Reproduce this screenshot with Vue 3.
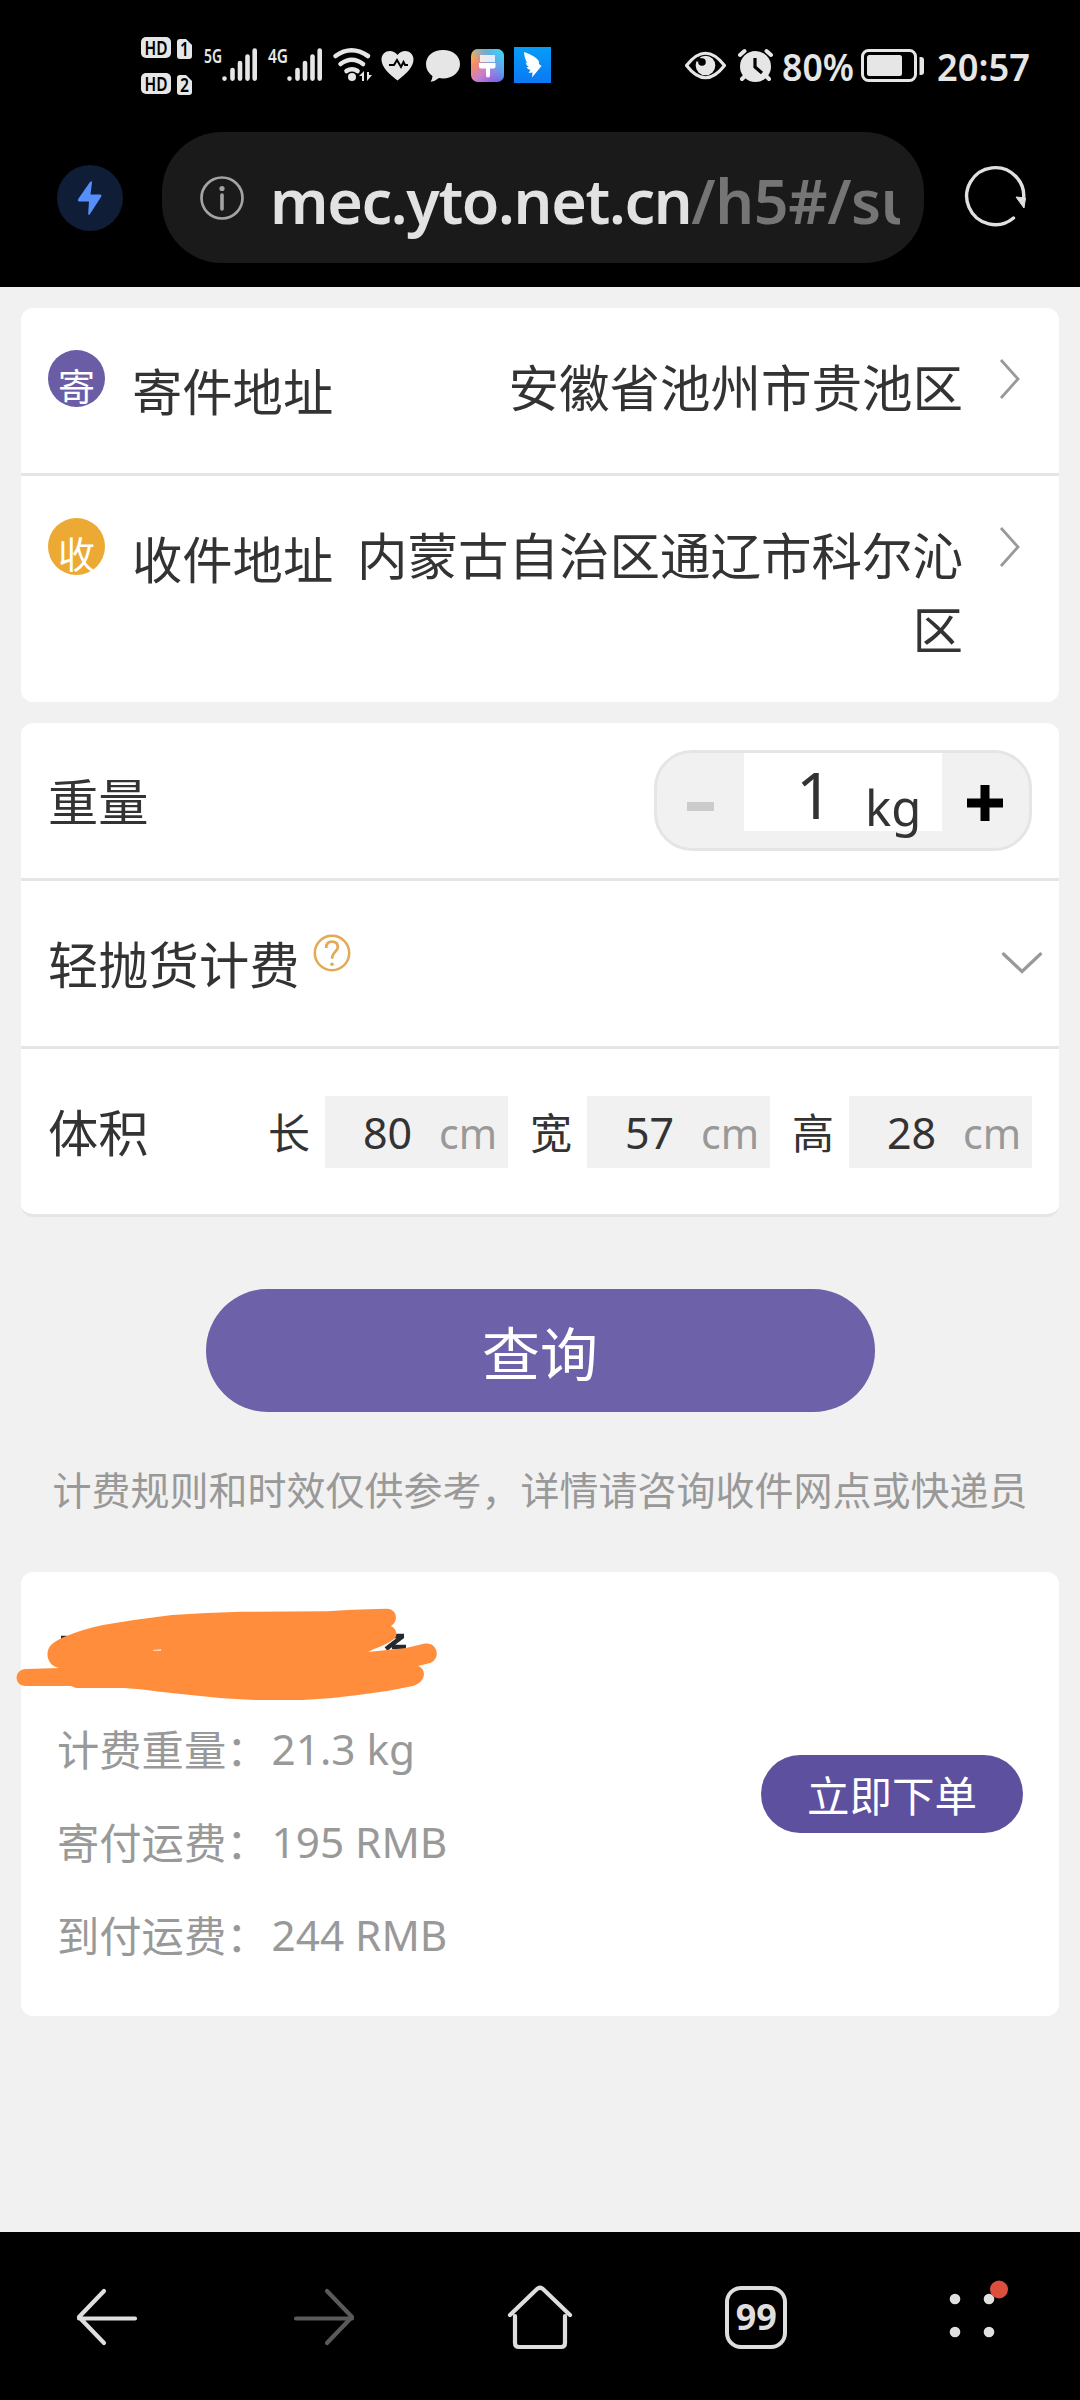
<script setup>
const addresses = [
  { badge: '寄', tone: 'send', label: '寄件地址', value: '安徽省池州市贵池区' },
  { badge: '收', tone: 'receive', label: '收件地址', value: '内蒙古自治区通辽市科尔沁区' },
]
const dimensions = [
  { name: '长', value: 80 },
  { name: '宽', value: 57 },
  { name: '高', value: 28 },
]
const fees = [
  { label: '计费重量：', value: '21.3 kg' },
  { label: '寄付运费：', value: '195 RMB' },
  { label: '到付运费：', value: '244 RMB' },
]
</script>

<template>
  <div class="screen">
    <header class="chrome">
      <svg class="status" viewBox="0 0 1080 110" width="1080" height="110">
        <defs>
          <linearGradient id="brush" x1="0" y1="0" x2="1" y2="1">
            <stop offset="0" stop-color="#ffc04a" />
            <stop offset=".3" stop-color="#f58a6a" />
            <stop offset=".55" stop-color="#c87fd0" />
            <stop offset="1" stop-color="#6a4df0" />
          </linearGradient>
          <linearGradient id="sky" x1="1" y1="0" x2=".35" y2=".6">
            <stop offset="0" stop-color="#35e0f5" />
            <stop offset=".5" stop-color="#4fb4f0" stop-opacity=".85" />
            <stop offset="1" stop-color="#4fb4f0" stop-opacity="0" />
          </linearGradient>
          <linearGradient id="wing" x1="0" y1="0" x2="0" y2="1">
            <stop offset="0" stop-color="#079df8" />
            <stop offset="1" stop-color="#0b78f4" />
          </linearGradient>
        </defs>
        <g fill="#e6e6e6">
          <rect x="141" y="37" width="30" height="21" rx="5" />
          <rect x="141" y="73" width="30" height="21" rx="5" />
          <path d="M180 39h6l6 6v11q0 3-3 3h-9q-3 0-3-3V42q0-3 3-3z" />
          <path d="M180 75h6l6 6v11q0 3-3 3h-9q-3 0-3-3V78q0-3 3-3z" />
        </g>
        <g fill="#000" font-weight="600" class="latin">
          <text x="144.500" y="54.500" font-size="20" textLength="23" lengthAdjust="spacingAndGlyphs">HD</text>
          <text x="144.500" y="90.500" font-size="20" textLength="23" lengthAdjust="spacingAndGlyphs">HD</text>
          <text x="180" y="56" font-size="19" textLength="9" lengthAdjust="spacingAndGlyphs">1</text>
          <text x="180" y="91.500" font-size="19" textLength="9" lengthAdjust="spacingAndGlyphs">2</text>
        </g>
        <g fill="#e6e6e6" font-weight="600" font-size="20" class="latin">
          <text x="204" y="63" textLength="18" lengthAdjust="spacingAndGlyphs">5G</text>
          <text x="268" y="63" textLength="20" lengthAdjust="spacingAndGlyphs">4G</text>
        </g>
        <g stroke="#e6e6e6" stroke-width="4.600" stroke-linecap="round">
          <path d="M224.500 78.500v.1M232.500 70v8.600M240 63v15.600M247.500 56.500v22.100M254.700 50.500v28.100" />
          <path d="M289.500 78.500v.1M297.500 70v8.600M305 63v15.600M312.500 56.500v22.100M319.700 50.500v28.100" />
        </g>
        <g fill="none" stroke="#e6e6e6" stroke-width="4.600" stroke-linecap="round">
          <path d="M335.500 56q16-11.500 32.500 0M340.500 64q11.500-8.500 22.500 0M346.500 71q5.500-3.500 11 0" />
        </g>
        <circle cx="352" cy="77" r="4" fill="#e6e6e6" />
        <path d="M359 76l5-5v10h-2v-5zM372 75l-5 6V72h2v3z" fill="#e6e6e6" />
        <path d="M397.500 80.500C389 74 381.500 67 381.500 59.500c0-9 11-11.500 16-4.500 5-7 16-4.500 16 4.500 0 7.500-7.500 14.500-16 21z" fill="#e6e6e6" />
        <path d="M389 65h5l3-5 4 7 2.500-5 1.500 3h3" fill="none" stroke="#000" stroke-width="2" />
        <path d="M443 50c10 0 17 6 17 14s-7 14.500-17 14.500q-2 0-4-.4-4 3.400-8.500 3.600 2-2.600 2-5.600-6.500-4.600-6.500-12c0-8 7-14.100 17-14.100z" fill="#e6e6e6" />
        <rect x="471" y="49" width="33" height="33" rx="7" fill="url(#brush)" />
        <rect x="471" y="49" width="33" height="33" rx="7" fill="url(#sky)" />
        <path d="M480 55h15v7h-15z" fill="#fff" opacity=".8" />
        <path d="M479 63h16.500v3.500q0 2-2 2h-3.500v7q0 2-2 2t-2-2v-7h-5q-2 0-2-2z" fill="#fff" />
        <rect x="514" y="47" width="37" height="36" fill="url(#wing)" />
        <path d="M524 52q10 3 14.500 8.500 1 1.500.5 3.500l2.500 2-9.500 11.500.5-5-4 .500 2-3q-3-.3-4-3l2.500.3q-3-2-3.500-5l2 1q-3-4-3.500-11.300z" fill="#fff" />

        <path d="M686.500 65.500Q705.500 41 724.500 65.500 705.500 90 686.500 65.500z" fill="none" stroke="#e6e6e6" stroke-width="3.200" stroke-linejoin="round" />
        <circle cx="705.500" cy="65.500" r="9.800" fill="#e6e6e6" />
        <circle cx="702" cy="62" r="3.800" fill="#000" />
        <path d="M697 57q3 .3 5 2l-5 3z" fill="#000" />
        <circle cx="755.500" cy="66.500" r="15.500" fill="#e6e6e6" />
        <g fill="none" stroke="#e6e6e6" stroke-width="4" stroke-linecap="round">
          <path d="M740 55l4.500-4M771 55l-4.500-4M742 79l3-3M769 79l-3-3" />
        </g>
        <path d="M755 58v9l7 6" fill="none" stroke="#000" stroke-width="3.200" />
        <text x="782" y="80.500" font-size="37.500" font-weight="600" textLength="72" lengthAdjust="spacingAndGlyphs" fill="#e6e6e6" class="latin">80%</text>
        <rect x="862.500" y="50.500" width="53" height="30" rx="6" fill="none" stroke="#e6e6e6" stroke-width="3" />
        <rect x="867" y="55" width="35" height="21" rx="2.500" fill="#e6e6e6" />
        <path d="M919.500 57h1.500q3 0 3 3v12q0 3-3 3h-1.500z" fill="#e6e6e6" />
        <text x="937" y="80.500" font-size="37.500" font-weight="600" textLength="93" lengthAdjust="spacingAndGlyphs" fill="#e6e6e6" class="latin">20:57</text>
      </svg>

      <div class="toolbar">
        <svg class="bolt" viewBox="0 0 66 66" width="66" height="66">
          <circle cx="33" cy="33" r="33" fill="#101d36" />
          <path d="M35 17.500l-1.500 12h10q1.500.5.8 2L33 49q-2 2-1.800-.5l.8-12H22q-1.800-.5-.8-2.500L33 17q2-1.500 2 .5z" fill="#568ffb" />
        </svg>
        <div class="url">
          <svg viewBox="0 0 44 44" width="44" height="44">
            <circle cx="22" cy="22" r="20.500" fill="none" stroke="#a3a3a3" stroke-width="2.700" />
            <circle cx="22" cy="12.500" r="2.600" fill="#a3a3a3" />
            <path d="M22 19v14" stroke="#a3a3a3" stroke-width="3.600" stroke-linecap="round" />
          </svg>
          <div class="url-text"><span class="host">mec.yto.net.cn</span><span class="path">/h5#/su</span></div>
        </div>
        <svg class="reload" viewBox="0 0 64 64" width="64" height="64">
          <path d="M50.500 52A28.500 28.500 0 1 1 60.300 35" fill="none" stroke="#e0e0e0" stroke-width="3.400" stroke-linecap="round" />
          <path d="M53 31l9.500 1-1.500 10z" fill="#e0e0e0" stroke="#e0e0e0" stroke-linejoin="round" />
        </svg>
      </div>
    </header>

    <main class="content">
      <section class="card">
        <div v-for="a in addresses" :key="a.tone" class="address" :class="a.tone">
          <span class="badge"><span>{{ a.badge }}</span></span>
          <span class="address-label">{{ a.label }}</span>
          <span class="address-value">{{ a.value }}</span>
          <svg viewBox="0 0 20 40" width="20" height="40">
            <path d="M1 1l17 19L1 39" fill="none" stroke="#999" stroke-width="2.800" />
          </svg>
        </div>
      </section>

      <section class="card parcel">
        <div class="row weight">
          <span>重量</span>
          <div class="stepper">
            <span class="minus"></span>
            <div class="amount"><b>1</b><i>kg</i></div>
            <svg viewBox="0 0 36 36" width="36" height="36"><path d="M18 0v36M0 18h36" stroke="#000" stroke-width="9" /></svg>
          </div>
        </div>
        <div class="row bulky">
          <span>轻抛货计费</span>
          <svg class="help" viewBox="0 0 38 38" width="38" height="38">
            <circle cx="19" cy="19" r="17.200" fill="none" stroke="#e4a955" stroke-width="2.500" />
            <path d="M13.200 14q0-6.300 5.800-6.300t5.800 5.500c0 4-5.600 5.500-5.600 10v1.500" fill="none" stroke="#e4a955" stroke-width="2.800" />
            <circle cx="19" cy="30.300" r="1.800" fill="#e4a955" />
          </svg>
          <svg class="down" viewBox="0 0 40 22" width="40" height="22">
            <path d="M1.500 2L20 19.500 38.500 2" fill="none" stroke="#999" stroke-width="3.200" stroke-linecap="round" />
          </svg>
        </div>
        <div class="row volume">
          <span>体积</span>
          <div class="dims">
            <div v-for="d in dimensions" :key="d.name" class="dim">
              <span>{{ d.name }}</span>
              <div class="field"><b>{{ d.value }}</b><i>cm</i></div>
            </div>
          </div>
        </div>
      </section>

      <button class="query">查询</button>
      <p class="notice">计费规则和时效仅供参考，详情请咨询收件网点或快递员</p>

      <section class="card result">
        <svg class="scribble" viewBox="0 0 450 110" width="450" height="110">
          <path d="M61 38h6M383 36h21M403 36L386 49M392 47h14" fill="none" stroke="#26292d" stroke-width="4.600" />
          <path d="M51 45Q55 41 64 37 83 29 103 25 138 19 172 15 207 12.700 241 11.700L327 11.300Q350 9.600 387 8.700C397 9 399 21 391 26 397 29 398 36 394 39Q388 44 374 49L368 52 406 48 425 43.500C438 42 441 59 430 63L418 66C427 69 426 82 413 86Q386 92 358 95 330 99 303 100L255 100Q235 99 220 98 190 95 162 92 142 89 124 88L76 88 71 86 26 86C13 86 14 69 26 69L59 68C46 65 45 51 51 45z" fill="#ff8d3b" />
          <path d="M148 50.800h5M153 50l8-1v2h-8z" fill="#ffd3b0" />
        </svg>
        <div class="fees">
          <div v-for="f in fees" :key="f.label" class="fee"><span>{{ f.label }}</span><span>{{ f.value }}</span></div>
        </div>
        <button class="order">立即下单</button>
      </section>
    </main>

    <nav class="nav">
      <svg viewBox="0 0 64 64" width="64" height="64">
        <path d="M29 6L4 32l25 26M4 33.500h56" fill="none" stroke="#dedede" stroke-width="4.200" stroke-linecap="round" stroke-linejoin="round" />
      </svg>
      <svg viewBox="0 0 64 64" width="64" height="64">
        <path d="M35 6l25 26-25 26M60 33.500H4" fill="none" stroke="#5a5a5a" stroke-width="4.200" stroke-linecap="round" stroke-linejoin="round" />
      </svg>
      <svg viewBox="0 0 64 64" width="64" height="64">
        <path d="M1 30L28 4q3-2.500 6 0L61 30M6 31v27q0 4 4 4h42q4 0 4-4V31" fill="none" stroke="#dedede" stroke-width="4.200" stroke-linecap="round" />
      </svg>
      <div class="tabs">99</div>
      <svg class="menu" viewBox="0 0 64 64" width="64" height="64">
        <g fill="#e0e0e0">
          <circle cx="15" cy="14" r="5.300" /><circle cx="49" cy="14" r="5.300" />
          <circle cx="15" cy="47" r="5.300" /><circle cx="49" cy="47" r="5.300" />
        </g>
        <circle cx="59" cy="4.500" r="9" fill="#dc4f3c" />
      </svg>
    </nav>
  </div>
</template>

<style>
body { margin: 0; background: #f1f1f1; }
</style>

<style scoped>
.screen {
  width: 1080px;
  height: 2400px;
  display: flex;
  flex-direction: column;
  background: #f1f1f1;
  color: #333;
  font-family: "Noto Sans", "Noto Sans CJK SC", sans-serif;
  overflow: hidden;
}
.screen * { box-sizing: border-box; }
svg { display: block; flex: none; overflow: visible; }
b, i { font-weight: 400; font-style: normal; }
button { border: 0; padding: 0; color: #fff; font-family: "Noto Sans CJK SC", sans-serif; display: block; }
.latin { font-family: "Noto Sans", sans-serif; }

.chrome { height: 287px; background: #000; flex: none; }
.toolbar { display: flex; align-items: center; height: 131px; margin-top: 22px; padding-left: 57px; }
.url {
  width: 762px;
  height: 131px;
  margin: 0 39px 0 39px;
  padding: 0 24px 0 38px;
  border-radius: 60px;
  background: #1a1a1a;
  display: flex;
  align-items: center;
}
.url-text {
  margin: 6px 0 0 26px;
  flex: 1;
  overflow: hidden;
  white-space: nowrap;
  font-size: 61px;
  line-height: 84px;
  font-weight: 600;
}
.host { color: #e2e2e2; letter-spacing: -1.35px; }
.path { color: #757575; letter-spacing: -0.4px; }

.content { flex: 1; padding: 21px 21px 0; font-family: "Noto Sans CJK SC", sans-serif; }
.card { background: #fff; border-radius: 12px; font-size: 50.300px; }

.address { display: flex; align-items: flex-start; padding: 42px 39px 0 27px; }
.address.send { height: 168px; border-bottom: 3px solid #e5e5e5; }
.address.receive { height: 226px; }
.badge {
  width: 57px;
  height: 57px;
  border-radius: 50%;
  color: #fff;
  font-size: 37px;
  line-height: 40px;
  text-align: center;
  padding-top: 15px;
}
.send .badge { background: #6a5da6; }
.receive .badge { background: #ecaa34; }
.badge span { display: block; }
.address-label { margin: 2px 0 0 27px; line-height: 74px; white-space: nowrap; }
.address-value { flex: 1; margin-left: 14px; line-height: 74px; margin-top: -2px; text-align: right; font-size: 50.500px; white-space: normal; }
.address svg { margin: 9px 0 0 37px; }

.parcel { margin-top: 21px; border-bottom: 3px solid #e5e5e5; }
.row { display: flex; align-items: center; padding: 0 27px; border-bottom: 3px solid #e5e5e5; }
.row > span { line-height: 74px; margin-top: -3px; }
.weight { height: 158px; }
.bulky { height: 168px; }
.volume { height: 165px; border: 0; }
.stepper {
  width: 378px;
  height: 101px;
  margin-left: auto;
  border: 3px solid #e5e5e5;
  border-radius: 38px;
  background: #f1f1f1;
  display: flex;
  align-items: center;
  padding: 0 26px 0 30px;
}
.stepper svg { margin-top: 4px; }
.minus { width: 27px; height: 9px; background: #ccc; margin-top: 11px; }
.amount {
  align-self: flex-start;
  display: flex;
  width: 198px;
  height: 78px;
  margin: 0 25px 0 30px;
  background: #fff;
  font-family: "Noto Sans", sans-serif;
}
.amount b { font-size: 64px; line-height: 84px; margin-left: 52px; width: 69px; }
.amount i { font-size: 49px; line-height: 108px; }
.help { margin: -22px 0 0 14px; }
.down { margin: -2px -10px 0 auto; }
.dims { display: flex; gap: 22px; margin-left: auto; }
.dim { display: flex; align-items: center; font-size: 42px; }
.dim > span { line-height: 62px; margin: -2px 15px 0 0; }
.field {
  width: 183px;
  height: 72px;
  display: flex;
  background: #f1f1f1;
  line-height: 74px;
  padding-right: 11px;
  font-family: "Noto Sans", sans-serif;
}
.field b { margin-left: 38px; font-size: 43px; }
.field i { margin-left: auto; color: #999; font-size: 41px; }

.query {
  width: 669px;
  height: 123px;
  margin: 72px auto 0;
  border-radius: 62px;
  background: #6d61a9;
  font-size: 58px;
  line-height: 122px;
}
.notice { margin: 47px 0 0; font-size: 39px; line-height: 58px; color: #999; text-align: center; white-space: nowrap; }

.result {
  position: relative;
  height: 444px;
  margin-top: 55px;
  display: flex;
  align-items: center;
  justify-content: space-between;
  padding: 0 36px 0 36px;
}
.scribble { position: absolute; left: -21px; top: 28px; }
.fees { margin-top: 94px; }
.fee { display: flex; height: 93px; align-items: center; font-size: 42.300px; color: #999; line-height: 62px; }
.fee span + span { font-family: "Noto Sans", sans-serif; margin: 2px 0 0 3px; }
.order { width: 262px; height: 78px; border-radius: 39px; background: #5d509f; font-size: 42.500px; line-height: 78px; }

.nav {
  height: 168px;
  flex: none;
  background: #000;
  display: flex;
  align-items: center;
  justify-content: space-between;
  padding: 2px 77px 0 75px;
}
.tabs {
  width: 62px;
  height: 63px;
  border: 4px solid #dedede;
  border-radius: 16px;
  color: #dedede;
  font-size: 36px;
  font-weight: 700;
  line-height: 53px;
  text-align: center;
}
.menu { margin-right: -1px; }
</style>
